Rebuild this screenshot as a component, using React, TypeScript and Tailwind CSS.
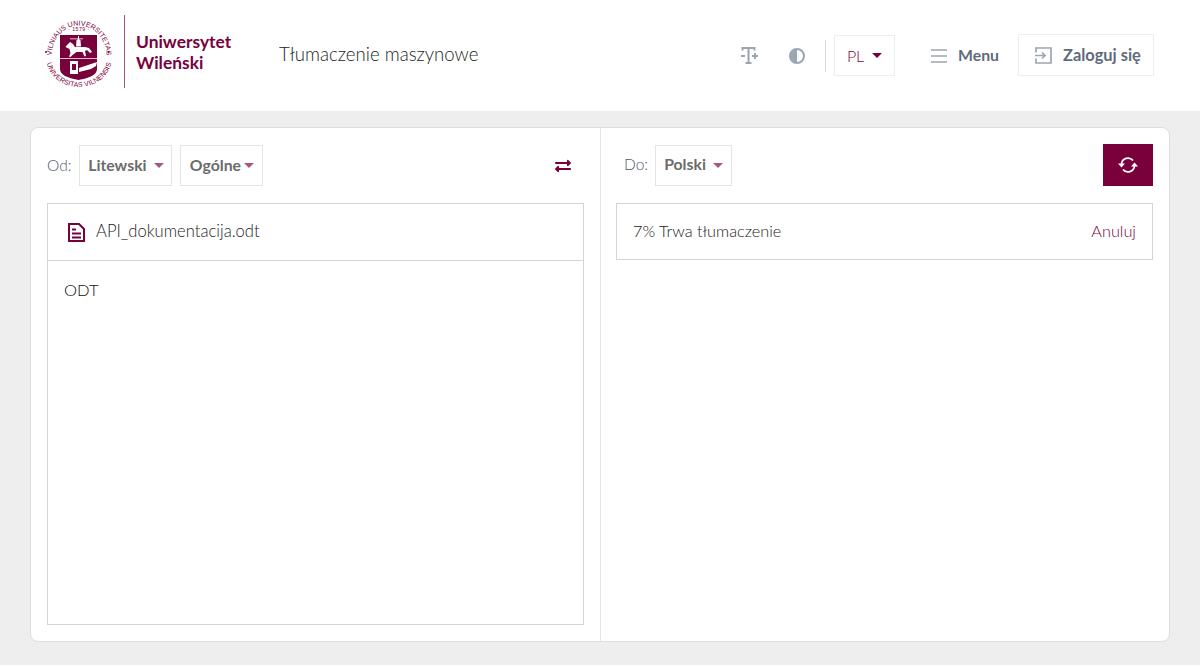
import React from "react";
import { FaExchangeAlt } from "react-icons/fa";

const C = "#7a003c";
const Caret = ({ color = C, o = 1 }: { color?: string; o?: number }) => (
  <svg width="10" height="5" viewBox="0 0 10 5" style={{ opacity: o }} className="shrink-0">
    <path d="M0 0h10L5 5z" fill={color} />
  </svg>
);

const Seal = () => (
  <svg width="68" height="73" viewBox="0 0 68 73" className="shrink-0 overflow-visible">
    <defs>
      <path id="top" d="M6.500 41 A27.500 30.500 0 1 1 61.500 41" />
      <path id="bot" d="M1 42 A33 30 0 0 0 67 42" />
    </defs>
    <text fontSize="7" fill={C} fontFamily="Liberation Sans, sans-serif">
      <textPath href="#top" startOffset="50%" textAnchor="middle" textLength="90">VILNIAUS UNIVERSITETAS</textPath>
    </text>
    <text fontSize="7" fill={C} fontFamily="Liberation Sans, sans-serif">
      <textPath href="#bot" startOffset="50%" textAnchor="middle" textLength="86">UNIVERSITAS VILNENSIS</textPath>
    </text>
    <text x="34" y="15.500" fontSize="5.200" fill={C} textAnchor="middle" fontFamily="Liberation Sans, sans-serif" letterSpacing="0.5">· 1579 ·</text>
    <circle cx="1" cy="37" r="1" fill={C} />
    <circle cx="63.500" cy="37" r="1" fill={C} />
    <path d="M15 20h37v34c0 3-2 5-5 7-4 2-9 3-13.500 4-4.500-1-9.500-2-13.500-4-3-2-5-4-5-7z" fill={C} />
    <path d="M15 43h37v.8H15z" fill="#fff" />
    <g fill="#fff">
      <path d="M22 30l3-3 3 2 2 3h10l4 1 3 4-2 1-3-3-2 1 1 5-1.500.5-2-4.500h-6l-4 3-2 2-1.500-.5 1.500-3.500-1-4-4-2z" />
      <path d="M31 31.500l.5-6 2-2 2 2 .5 6z" />
      <path d="M25 23.500h13v.8H25zM33 21h1v3h-1z" />
      <rect x="25" y="46" width="8" height="13" />
      <path d="M34 53l12-4 6-2-1 4-5 3-12 3z" />
    </g>
    <rect x="27" y="49" width="4" height="6" fill={C} />
  </svg>
);

const Sel = ({ label, w, gap }: { label: string; w: string; gap: string }) => (
  <div className={`flex items-center justify-center h-[41px] border border-[#e4e4e4] text-[15.800px] font-bold text-[#6b6b6b] ${w} ${gap}`}>
    <span className="pb-[2px]">{label}</span>
    <Caret o={0.65} />
  </div>
);

export default function App() {
  return (
    <div className="w-[1200px] h-[665px] bg-[#eeeeee] overflow-hidden flex flex-col" style={{ fontFamily: "Lato, 'Noto Sans', sans-serif" }}>
      <header className="h-[111px] bg-white flex items-center pl-[45px] pr-[46px] shrink-0">
        <div className="flex items-center mb-[8px]">
          <Seal />
          <div className="w-px h-[73px] bg-[#a5577c] ml-[11px] mr-[11px] shrink-0" />
          <div className="text-[17.400px] leading-[21px] font-bold text-[#7a003c] w-[143px] shrink-0">
            <div>Uniwersytet</div>
            <div>Wileński</div>
          </div>
        </div>
        <div className="text-[18.600px] text-[#222] font-light pb-[2px]">Tłumaczenie maszynowe</div>
        <div className="ml-auto flex items-center">
          <svg width="18" height="17" viewBox="0 0 18 17" fill="none" stroke="#9ca5b3" strokeWidth="2" className="mr-[30px]">
            <path d="M1.500 3.500V1h12v2.500M7.500 1v15M4.500 16h6M0 9h4M11 9h6M14 6v6" />
          </svg>
          <svg width="16" height="16" viewBox="0 0 16 16" className="mr-[20px]">
            <circle cx="8" cy="8" r="7" fill="none" stroke="#9ca5b3" strokeWidth="2" />
            <path d="M8 1a7 7 0 0 0 0 14z" fill="#9ca5b3" />
          </svg>
          <div className="w-px h-[32px] bg-[#dcdcdc] mr-[8px]" />
          <div className="w-[61px] h-[41px] border border-[#eeeeee] flex items-center justify-center gap-[8px] text-[16px] font-light text-[#7a003c] mr-[36px]">
            <span>PL</span>
            <Caret />
          </div>
          <svg width="16" height="14" viewBox="0 0 16 14" fill="none" stroke="#9ca5b3" strokeWidth="1.700" className="mr-[11px]">
            <path d="M0 1h16M0 7h16M0 13h16" />
          </svg>
          <div className="text-[15.800px] font-bold text-[#5f6b7d] mr-[19px] pb-[2px]">Menu</div>
          <div className="w-[136px] h-[42px] border border-[#eeeeee] flex items-center pl-[16px] mb-[1px]">
            <svg width="17" height="17" viewBox="0 0 17 17" fill="none" stroke="#9ca5b3" strokeWidth="1.700" className="mr-[11px] shrink-0">
              <path d="M1 5.500V1h15v15H1v-4.500M0 8.500h10M7 5.500l3 3-3 3" />
            </svg>
            <span className="text-[16.400px] font-bold text-[#5f6b7d]">Zaloguj się</span>
          </div>
        </div>
      </header>

      <main className="mx-[30px] mt-[16px] h-[515px] bg-white border border-[#dddddd] rounded-lg grid grid-cols-[570px_1fr]">
        <section className="border-r border-[#e6e6e6] pl-[16px] pr-[16px] pt-[17px]">
          <div className="flex items-center h-[41px] mb-[17px]">
            <span className="text-[15.500px] font-light text-[#4d5a6c] mr-[8px]">Od:</span>
            <Sel label="Litewski" w="w-[93px]" gap="gap-[7px]" />
            <div className="w-2" />
            <Sel label="Ogólne" w="w-[83px]" gap="gap-[3px]" />
            <FaExchangeAlt className="ml-auto mr-[13px] text-[#7a003c]" size={16} />
          </div>
          <div className="h-[422px] border border-[#d4d4d4]">
            <div className="h-[57px] border-b border-[#d4d4d4] flex items-center pl-[20px]">
              <svg width="17" height="19" viewBox="0 0 17 19" fill="none" stroke={C} strokeWidth="2" className="mr-[11px] shrink-0">
                <path d="M1 1h10l5 5v12H1zM4 6.500h4M4 10.500h9M4 14.500h9" />
              </svg>
              <span className="text-[16.600px] font-light text-[#222] pb-[2px]">API_dokumentacija.odt</span>
            </div>
            <div className="pl-[16px] pt-[19px] text-[16.500px] font-light leading-[20px] text-[#111]">ODT</div>
          </div>
        </section>
        <section className="pl-[15px] pr-[16px] pt-[16px]">
          <div className="flex items-center h-[42px] mb-[17px]">
            <span className="text-[15.500px] font-light text-[#4d5a6c] ml-[8px] mr-[7px]">Do:</span>
            <Sel label="Polski" w="w-[77px]" gap="gap-[7px]" />
            <div className="ml-auto w-[50px] h-[42px] bg-[#7a003c] flex items-center justify-center">
              <svg width="20" height="18" viewBox="0 0 20 18" fill="none" stroke="#fff" strokeWidth="1.800">
                <path d="M3.500 8A6.500 6.500 0 0 1 15 4.500M16.500 10A6.500 6.500 0 0 1 5 13.500" />
                <path d="M0 7.500h7l-3.500 4zM13 10.500h7l-3.500-4z" fill="#fff" stroke="none" />
              </svg>
            </div>
          </div>
          <div className="h-[57px] border border-[#d4d4d4] flex items-center justify-between pl-[16px] pr-[16px] text-[16.300px] font-light">
            <span className="text-[#222]">7% Trwa tłumaczenie</span>
            <span className="text-[#7a003c]">Anuluj</span>
          </div>
        </section>
      </main>
    </div>
  );
}
